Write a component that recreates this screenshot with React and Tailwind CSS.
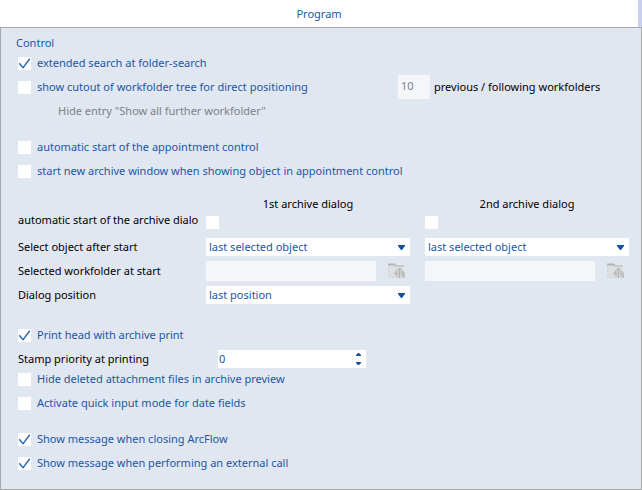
import React, { useState } from 'react';

const SELECT_OPTIONS = ['last selected object', 'no object'];
const POSITION_OPTIONS = ['last position', 'centered'];

const CheckBox = ({ checked, onChange, ...rest }) => (
  <span className="relative block size-[13px] shrink-0">
    <input
      type="checkbox"
      checked={checked}
      onChange={onChange}
      className="block size-[13px] appearance-none bg-white"
      {...rest}
    />
    {checked && (
      <svg viewBox="0 0 13 13" className="pointer-events-none absolute inset-0 size-[13px]">
        <path d="M1.2 6.2 L5 10.6 L11.8 1.8" fill="none" stroke="#2a66ab" strokeWidth="1.4" />
      </svg>
    )}
  </span>
);

const CheckRow = ({ label, defaultChecked = false, className = 'h-6' }) => {
  const [checked, setChecked] = useState(defaultChecked);
  return (
    <label className={`flex items-center gap-[6px] whitespace-nowrap text-[#1a56a5] ${className}`}>
      <CheckBox checked={checked} onChange={(e) => setChecked(e.target.checked)} />
      {label}
    </label>
  );
};

const DialogCheck = ({ label }) => {
  const [checked, setChecked] = useState(false);
  return (
    <div className="flex h-[23px] items-start pt-1">
      <CheckBox checked={checked} onChange={(e) => setChecked(e.target.checked)} aria-label={label} />
    </div>
  );
};

const DropDown = ({ id, label, options }) => (
  <div className="relative flex h-6 items-center">
    <select
      id={id}
      aria-label={label}
      className="h-[18px] w-full appearance-none bg-white pr-5 pl-[3px] leading-4 text-[#1a56a5]"
    >
      {options.map((o) => <option key={o}>{o}</option>)}
    </select>
    <svg viewBox="0 0 7 5" className="pointer-events-none absolute right-[5px] h-[5px] w-[7px]">
      <path d="M0 0 H7 V1 L4 5 H3 L0 1 Z" fill="#12549f" />
    </svg>
  </div>
);

const FolderIcon = () => (
  <svg viewBox="0 0 17 16" className="h-4 w-[17px]">
    <path d="M1 2 H15 V14.5 H1 Z" fill="#dddfe1" />
    <path d="M0 .5 H7 L8.5 2.5 H16 V3.5 H8 L6.5 2.5 H0 Z" fill="#b2b3b5" />
    <path d="M.5 4 V14.5 H5" fill="none" stroke="#c9cbce" strokeDasharray="1 1" />
    <path d="M11.5 4.5 L17 10 V15 H13.5 V11 H12.5 V15 H7.5 V12 L6 10 Z" fill="#cfd1d3" />
    <path d="M11.5 5 L6 10.5 M11.5 5 L16.5 10 M11.5 6 V15 M9 9 V12 M14 9 V13 M16 10 V15 M7 12 L9 10" fill="none" stroke="#b0b2b5" strokeWidth="1" />
  </svg>
);

const FolderField = ({ id, label }) => (
  <div className="flex h-6 items-center">
    <input
      id={id}
      aria-label={label}
      type="text"
      disabled
      className="h-5 min-w-0 flex-1 bg-[#f5f6fa] px-1"
    />
    <button type="button" disabled aria-label="Choose workfolder" className="mr-[5px] ml-3">
      <FolderIcon />
    </button>
  </div>
);

const StampPriority = () => {
  const [value, setValue] = useState(0);
  return (
    <div className="mt-[2px] flex h-5 items-center">
      <label htmlFor="stamp" className="w-[200px] shrink-0">Stamp priority at printing</label>
      <div className="flex h-[18px] w-[148px] bg-white">
        <input
          id="stamp"
          type="text"
          value={value}
          onChange={(e) => setValue(Number(e.target.value) || 0)}
          className="min-w-0 flex-1 pl-[1px] text-[#1a56a5]"
        />
        <div className="flex w-[15px] flex-col">
          <button
            type="button"
            aria-label="Increase"
            onClick={() => setValue(value + 1)}
            className="flex h-[9px] items-center justify-center"
          >
            <svg viewBox="0 0 5 3" className="h-[3px] w-[5px]"><path d="M0 3 V2 L2 0 H3 L5 2 V3 Z" fill="#12549f" /></svg>
          </button>
          <button
            type="button"
            aria-label="Decrease"
            onClick={() => setValue(Math.max(0, value - 1))}
            className="flex h-[9px] items-center justify-center"
          >
            <svg viewBox="0 0 5 3" className="h-[3px] w-[5px]"><path d="M0 0 H5 V1 L3 3 H2 L0 1 Z" fill="#12549f" /></svg>
          </button>
        </div>
      </div>
    </div>
  );
};

const App = () => (
  <main className="bg-white font-['Noto_Sans','Open_Sans',sans-serif] text-[11px] leading-4 text-black">
    <header className="flex h-[27px] items-center justify-center border-r-4 border-[#c9d0ee] text-[#1a56a5]">
      <h1>Program</h1>
    </header>

    <section className="border border-[#a6a8ac] bg-[#e1e7f1] pr-3 pb-[14px] pl-[17px]">
      <h2 className="-ml-[2px] pt-[7px] text-[#1a56a5]">Control</h2>

      <CheckRow label="extended search at folder-search" defaultChecked />
      <div className="flex h-6 items-center">
        <div className="w-[380px] shrink-0">
          <CheckRow label="show cutout of workfolder tree for direct positioning" />
        </div>
        <input
          id="range"
          type="text"
          disabled
          defaultValue="10"
          className="h-6 w-8 shrink-0 self-start bg-[#f5f6fa] pb-1 pl-[3px] text-[#7d8187]"
        />
        <label htmlFor="range" className="ml-1 whitespace-nowrap">previous / following workfolders</label>
      </div>
      <p className="flex h-6 items-center pl-10 text-[#7d8187]">Hide entry "Show all further workfolder"</p>

      <div className="mt-3">
        <CheckRow label="automatic start of the appointment control" />
        <CheckRow label="start new archive window when showing object in appointment control" />
      </div>

      {/* settings per archive dialog */}
      <div className="mt-[13px] grid grid-cols-[173px_1fr_1fr] items-center gap-x-[15px]">
        <span />
        <h3 className="h-4 text-center">1st archive dialog</h3>
        <h3 className="h-4 text-center">2nd archive dialog</h3>

        <span className="self-start whitespace-nowrap">automatic start of the archive dialo</span>
        <DialogCheck label="Automatic start of the 1st archive dialog" />
        <DialogCheck label="Automatic start of the 2nd archive dialog" />

        <label htmlFor="object1">Select object after start</label>
        <DropDown id="object1" options={SELECT_OPTIONS} />
        <DropDown id="object2" label="Select object after start, 2nd dialog" options={SELECT_OPTIONS} />

        <label htmlFor="folder1">Selected workfolder at start</label>
        <FolderField id="folder1" />
        <FolderField id="folder2" label="Selected workfolder at start, 2nd dialog" />

        <label htmlFor="position">Dialog position</label>
        <DropDown id="position" options={POSITION_OPTIONS} />
      </div>

      <div className="mt-4">
        <CheckRow label="Print head with archive print" defaultChecked />
        <StampPriority />
        <CheckRow label="Hide deleted attachment files in archive preview" className="h-5" />
        <CheckRow label="Activate quick input mode for date fields" className="mt-[2px] h-6" />
      </div>

      <div className="mt-3">
        <CheckRow label="Show message when closing ArcFlow" defaultChecked />
        <CheckRow label="Show message when performing an external call" defaultChecked />
      </div>
    </section>
  </main>
);

export default App;
